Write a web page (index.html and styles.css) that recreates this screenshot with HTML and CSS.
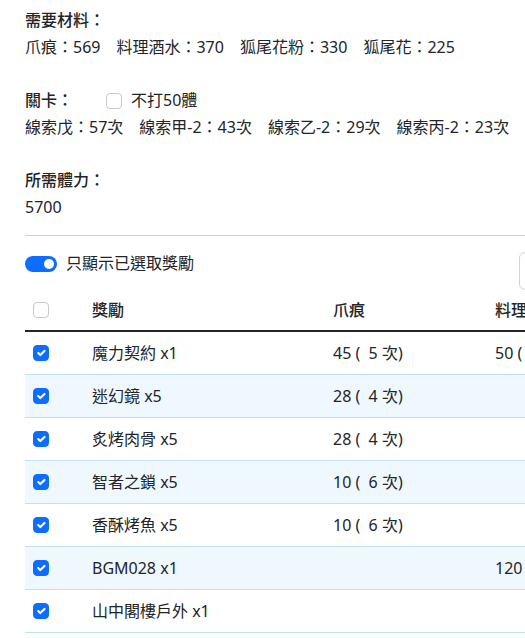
FILE: index.html
```html
<!DOCTYPE html>
<html lang="zh-Hant">
<head>
<meta charset="utf-8">
<title>獎勵計算</title>
<link rel="stylesheet" href="styles.css">
</head>
<body>
<div class="page">
  <section class="block">
    <div class="label">需要材料：</div>
    <div class="items"><span>爪痕：569</span><span>料理酒水：370</span><span>狐尾花粉：330</span><span>狐尾花：225</span></div>
  </section>
  <section class="block">
    <div class="label-row"><span class="label">關卡：</span><span class="check-inline"><span class="cb"></span><span>不打50體</span></span></div>
    <div class="items"><span>線索戊：57次</span><span>線索甲-2：43次</span><span>線索乙-2：29次</span><span>線索丙-2：23次</span></div>
  </section>
  <section class="block last">
    <div class="label">所需體力：</div>
    <div>5700</div>
  </section>
  <hr class="rule">
  <div class="toolbar">
    <div class="switch-group"><span class="switch"><span class="knob"></span></span><span>只顯示已選取獎勵</span></div>
    <div class="search"></div>
  </div>
  <table class="rewards">
    <colgroup><col class="c1"><col class="c2"><col class="c3"><col class="c4"></colgroup>
    <thead>
      <tr><th><span class="cb"></span></th><th>獎勵</th><th>爪痕</th><th>料理酒水</th></tr>
    </thead>
    <tbody>
      <tr><td><span class="cb on"><svg viewBox="0 0 20 20"><path d="M6 10l3 3 6-6"/></svg></span></td><td>魔力契約 x1</td><td>45 (&nbsp;&nbsp;5 次)</td><td>50 (&nbsp;&nbsp;4 次)</td></tr>
      <tr class="alt"><td><span class="cb on"><svg viewBox="0 0 20 20"><path d="M6 10l3 3 6-6"/></svg></span></td><td>迷幻鏡 x5</td><td>28 (&nbsp;&nbsp;4 次)</td><td></td></tr>
      <tr><td><span class="cb on"><svg viewBox="0 0 20 20"><path d="M6 10l3 3 6-6"/></svg></span></td><td>炙烤肉骨 x5</td><td>28 (&nbsp;&nbsp;4 次)</td><td></td></tr>
      <tr class="alt"><td><span class="cb on"><svg viewBox="0 0 20 20"><path d="M6 10l3 3 6-6"/></svg></span></td><td>智者之鎖 x5</td><td>10 (&nbsp;&nbsp;6 次)</td><td></td></tr>
      <tr><td><span class="cb on"><svg viewBox="0 0 20 20"><path d="M6 10l3 3 6-6"/></svg></span></td><td>香酥烤魚 x5</td><td>10 (&nbsp;&nbsp;6 次)</td><td></td></tr>
      <tr class="alt"><td><span class="cb on"><svg viewBox="0 0 20 20"><path d="M6 10l3 3 6-6"/></svg></span></td><td>BGM028 x1</td><td></td><td>120</td></tr>
      <tr><td><span class="cb on"><svg viewBox="0 0 20 20"><path d="M6 10l3 3 6-6"/></svg></span></td><td>山中閣樓戶外 x1</td><td></td><td></td></tr>
    </tbody>
  </table>
</div>
</body>
</html>
```
FILE: styles.css
```css
html, body {
  margin: 0;
  padding: 0;
  overflow: hidden;
  background: #fff;
}
body {
  font-family: "Noto Sans", "Noto Sans CJK TC", sans-serif;
  font-size: 16px;
  line-height: 27px;
  color: #212529;
}
.page {
  padding: 7px 0 0 25px;
  width: 900px;
}
.block {
  margin-bottom: 26px;
}
.block.last {
  margin-bottom: 14px;
}
.label {
  font-weight: 500;
}
.items {
  display: flex;
  gap: 16px;
}
.label-row {
  display: flex;
  align-items: center;
}
.check-inline {
  display: inline-flex;
  align-items: center;
  gap: 9px;
  margin-left: 33px;
}
.cb {
  display: inline-flex;
  align-items: center;
  justify-content: center;
  box-sizing: border-box;
  width: 16px;
  height: 16px;
  border: 1px solid #c6c9cc;
  border-radius: 4px;
  background: #fff;
  vertical-align: middle;
}
.cb.on {
  background: #0d6efd;
  border-color: #0d6efd;
}
.cb svg {
  width: 14px;
  height: 14px;
  fill: none;
  stroke: #fff;
  stroke-width: 3;
  stroke-linecap: round;
  stroke-linejoin: round;
}
.rule {
  border: 0;
  border-top: 1px solid #cfd1d3;
  margin: 0;
}
.toolbar {
  display: grid;
  grid-template-columns: 494px auto;
  align-items: start;
  margin-top: 16px;
  height: 38px;
}
.switch-group {
  display: flex;
  align-items: center;
  gap: 9px;
  margin-top: -2px;
}
.switch {
  position: relative;
  box-sizing: border-box;
  width: 32px;
  height: 16px;
  border-radius: 8px;
  background: #0d6efd;
}
.knob {
  position: absolute;
  right: 3px;
  top: 3px;
  width: 10px;
  height: 10px;
  border-radius: 50%;
  background: #fff;
}
.search {
  width: 200px;
  height: 38px;
  box-sizing: border-box;
  border: 1px solid #ced4da;
  border-radius: 6px;
}
.rewards {
  border-collapse: collapse;
  width: 870px;
  table-layout: fixed;
}
.c1 { width: 59px; }
.c2 { width: 241px; }
.c3 { width: 162px; }
.c4 { width: 408px; }
.rewards th {
  font-weight: 500;
  text-align: left;
  padding: 8px 8px;
  line-height: 24px;
  border-bottom: 2px solid #212529;
}
.rewards td {
  padding: 8px 8px;
  line-height: 26px;
  border-bottom: 1px solid #bfe1f6;
  white-space: nowrap;
}
.rewards th:first-child, .rewards td:first-child {
  line-height: 0;
}
.rewards tr.alt td {
  background: #f0f8ff;
}
```
